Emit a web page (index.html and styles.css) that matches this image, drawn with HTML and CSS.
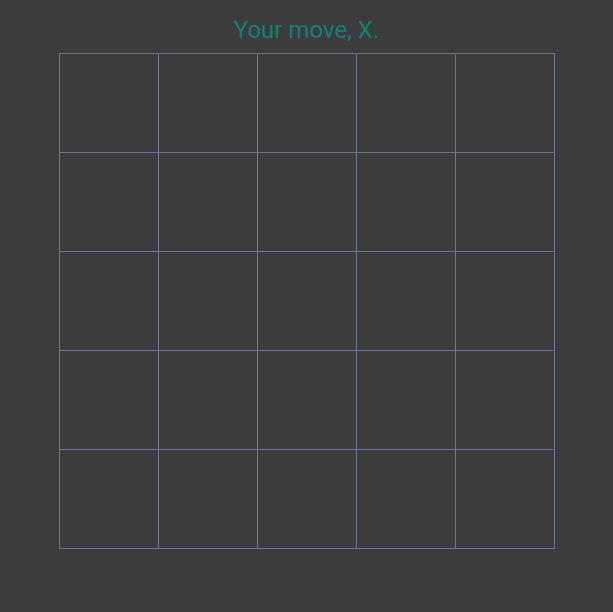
FILE: index.html
```html
<!DOCTYPE html>
<html>
<head>
<meta charset="utf-8">
<link rel="stylesheet" href="styles.css">
</head>
<body>
<div class="app">
  <h1 class="status">Your move, X.</h1>
  <div class="board">
    <div class="cell"></div><div class="cell"></div><div class="cell"></div><div class="cell"></div><div class="cell"></div>
    <div class="cell"></div><div class="cell"></div><div class="cell"></div><div class="cell"></div><div class="cell"></div>
    <div class="cell"></div><div class="cell"></div><div class="cell"></div><div class="cell"></div><div class="cell"></div>
    <div class="cell"></div><div class="cell"></div><div class="cell"></div><div class="cell"></div><div class="cell"></div>
    <div class="cell"></div><div class="cell"></div><div class="cell"></div><div class="cell"></div><div class="cell"></div>
  </div>
</div>
</body>
</html>
```

FILE: styles.css
```css
html, body {
  margin: 0;
  padding: 0;
  background: #3c3c3c;
  height: 100%;
}
.app {
  padding-top: 16px;
  font-family: Roboto, "Liberation Sans", sans-serif;
}
.status {
  margin: 0 0 9px 0;
  font-size: 24px;
  line-height: 28px;
  font-weight: 400;
  color: #177f72;
  text-align: center;
}
.board {
  margin-left: 59px;
  width: 495px;
  display: grid;
  grid-template-columns: repeat(5, 99px);
  grid-template-rows: repeat(5, 99px);
  border-left: 1px solid #6a7599;
  border-top: 1px solid #6a7599;
}
.cell {
  border-right: 1px solid #6a7599;
  border-bottom: 1px solid #6a7599;
}
```
